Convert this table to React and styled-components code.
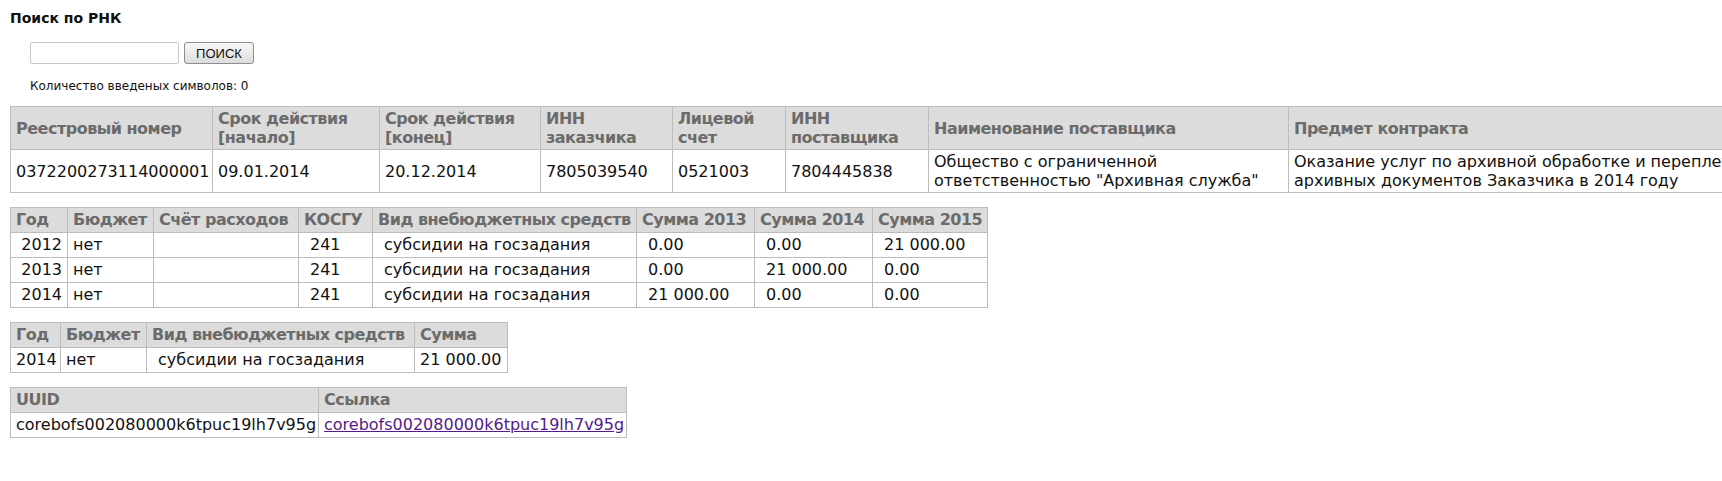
import React from "react";
import styled, { createGlobalStyle } from "styled-components";

const GlobalStyle = createGlobalStyle`
  body {
    margin: 0;
    background: #fff;
    font-family: "DejaVu Sans", Verdana, sans-serif;
    color: #111;
  }
`;

const contractCols = [202, 167, 161, 132, 113, 143, 360, 520];
const fundsCols = [57, 86, 145, 74, 264, 118, 118, 115];
const planCols = [50, 86, 268, 93];
const linkCols = [308, 308];

const fundsRows = [
  ["2012", "нет", "", "241", "субсидии на госзадания", "0.00", "0.00", "21 000.00"],
  ["2013", "нет", "", "241", "субсидии на госзадания", "0.00", "21 000.00", "0.00"],
  ["2014", "нет", "", "241", "субсидии на госзадания", "21 000.00", "0.00", "0.00"],
];

function Cols({ widths }) {
  return (
    <colgroup>
      {widths.map((w, i) => (
        <col key={i} style={{ width: w }} />
      ))}
    </colgroup>
  );
}

const total = (cols) => cols.reduce((a, b) => a + b, 0) + 1;

function App() {
  return (
    <Page>
      <GlobalStyle />
      <Title>Поиск по РНК</Title>
      <SearchForm>
        <SearchInput type="text" />
        <SearchButton type="button">ПОИСК</SearchButton>
      </SearchForm>
      <Counter>Количество введеных символов: 0</Counter>

      <Table $first $tight style={{ width: total(contractCols) }}>
        <Cols widths={contractCols} />
        <thead>
          <tr>
            <Th $wrap>Реестровый номер</Th>
            <Th $wrap>Срок действия [начало]</Th>
            <Th $wrap>Срок действия [конец]</Th>
            <Th $wrap>ИНН заказчика</Th>
            <Th $wrap>Лицевой счет</Th>
            <Th $wrap>ИНН поставщика</Th>
            <Th $wrap>Наименование поставщика</Th>
            <Th $wrap>Предмет контракта</Th>
          </tr>
        </thead>
        <tbody>
          <tr>
            <Td>0372200273114000001</Td>
            <Td>09.01.2014</Td>
            <Td>20.12.2014</Td>
            <Td>7805039540</Td>
            <Td>0521003</Td>
            <Td>7804445838</Td>
            <Td>Общество с ограниченной ответственностью "Архивная служба"</Td>
            <Td>
              Оказание услуг по архивной обработке и переплету архивных
              документов Заказчика в 2014 году
            </Td>
          </tr>
        </tbody>
      </Table>

      <Table style={{ width: total(fundsCols) }}>
        <Cols widths={fundsCols} />
        <thead>
          <tr>
            <Th>Год</Th>
            <Th>Бюджет</Th>
            <Th>Счёт расходов</Th>
            <Th>КОСГУ</Th>
            <Th>Вид внебюджетных средств</Th>
            <Th>Сумма 2013</Th>
            <Th>Сумма 2014</Th>
            <Th>Сумма 2015</Th>
          </tr>
        </thead>
        <tbody>
          {fundsRows.map((row) => (
            <tr key={row[0]}>
              <Td $align="right">{row[0]}</Td>
              <Td>{row[1]}</Td>
              <Td>{row[2]}</Td>
              <Td $indent>{row[3]}</Td>
              <Td $indent>{row[4]}</Td>
              <Td $indent>{row[5]}</Td>
              <Td $indent>{row[6]}</Td>
              <Td $indent>{row[7]}</Td>
            </tr>
          ))}
        </tbody>
      </Table>

      <Table style={{ width: total(planCols) }}>
        <Cols widths={planCols} />
        <thead>
          <tr>
            <Th>Год</Th>
            <Th>Бюджет</Th>
            <Th>Вид внебюджетных средств</Th>
            <Th>Сумма</Th>
          </tr>
        </thead>
        <tbody>
          <tr>
            <Td>2014</Td>
            <Td>нет</Td>
            <Td $indent>субсидии на госзадания</Td>
            <Td>21 000.00</Td>
          </tr>
        </tbody>
      </Table>

      <Table style={{ width: total(linkCols) }}>
        <Cols widths={linkCols} />
        <thead>
          <tr>
            <Th>UUID</Th>
            <Th>Ссылка</Th>
          </tr>
        </thead>
        <tbody>
          <tr>
            <Td>corebofs002080000k6tpuc19lh7v95g</Td>
            <Td>
              <Link href="#">corebofs002080000k6tpuc19lh7v95g</Link>
            </Td>
          </tr>
        </tbody>
      </Table>
    </Page>
  );
}

const Page = styled.div`
  padding: 9px 10px 20px;
  overflow: hidden;
`;

const Title = styled.h1`
  margin: 0;
  font-size: 14px;
  line-height: 18px;
  font-weight: bold;
  color: #111;
`;

const SearchForm = styled.div`
  display: flex;
  align-items: center;
  gap: 5px;
  margin: 14px 0 0 20px;
`;

const SearchInput = styled.input`
  box-sizing: border-box;
  width: 149px;
  height: 22px;
  border: 1px solid #c8c8c8;
  border-radius: 2px;
  background: #fff;
`;

const SearchButton = styled.button`
  box-sizing: border-box;
  width: 70px;
  height: 22px;
  margin-top: 1px;
  padding: 0;
  font-family: "Liberation Sans", Arial, sans-serif;
  font-size: 13px;
  color: #111;
  border: 1px solid #8f8f8f;
  border-radius: 3px;
  background: linear-gradient(to bottom, #f8f8f8, #dcdcdc);
`;

const Counter = styled.p`
  margin: 14px 0 0 20px;
  font-size: 12px;
  line-height: 16px;
  color: #111;
`;

const Table = styled.table`
  table-layout: fixed;
  border-collapse: collapse;
  margin-top: ${(p) => (p.$first ? "12px" : "14px")};
  font-size: 16px;
  line-height: ${(p) => (p.$tight ? "19px" : "20px")};
`;

const Th = styled.th`
  border: 1px solid #bcbcbc;
  background: #dcdcdc;
  color: #6b6b6b;
  font-weight: bold;
  letter-spacing: -0.5px;
  text-align: left;
  vertical-align: middle;
  white-space: ${(p) => (p.$wrap ? "normal" : "nowrap")};
  padding: 2px 5px;
`;

const Td = styled.td`
  border: 1px solid #bcbcbc;
  text-align: ${(p) => p.$align || "left"};
  vertical-align: middle;
  padding: 2px 5px 2px ${(p) => (p.$indent ? "11px" : "5px")};
  white-space: normal;
`;

const Link = styled.a`
  color: #551a8b;
  text-decoration: underline;
`;

export default App;
